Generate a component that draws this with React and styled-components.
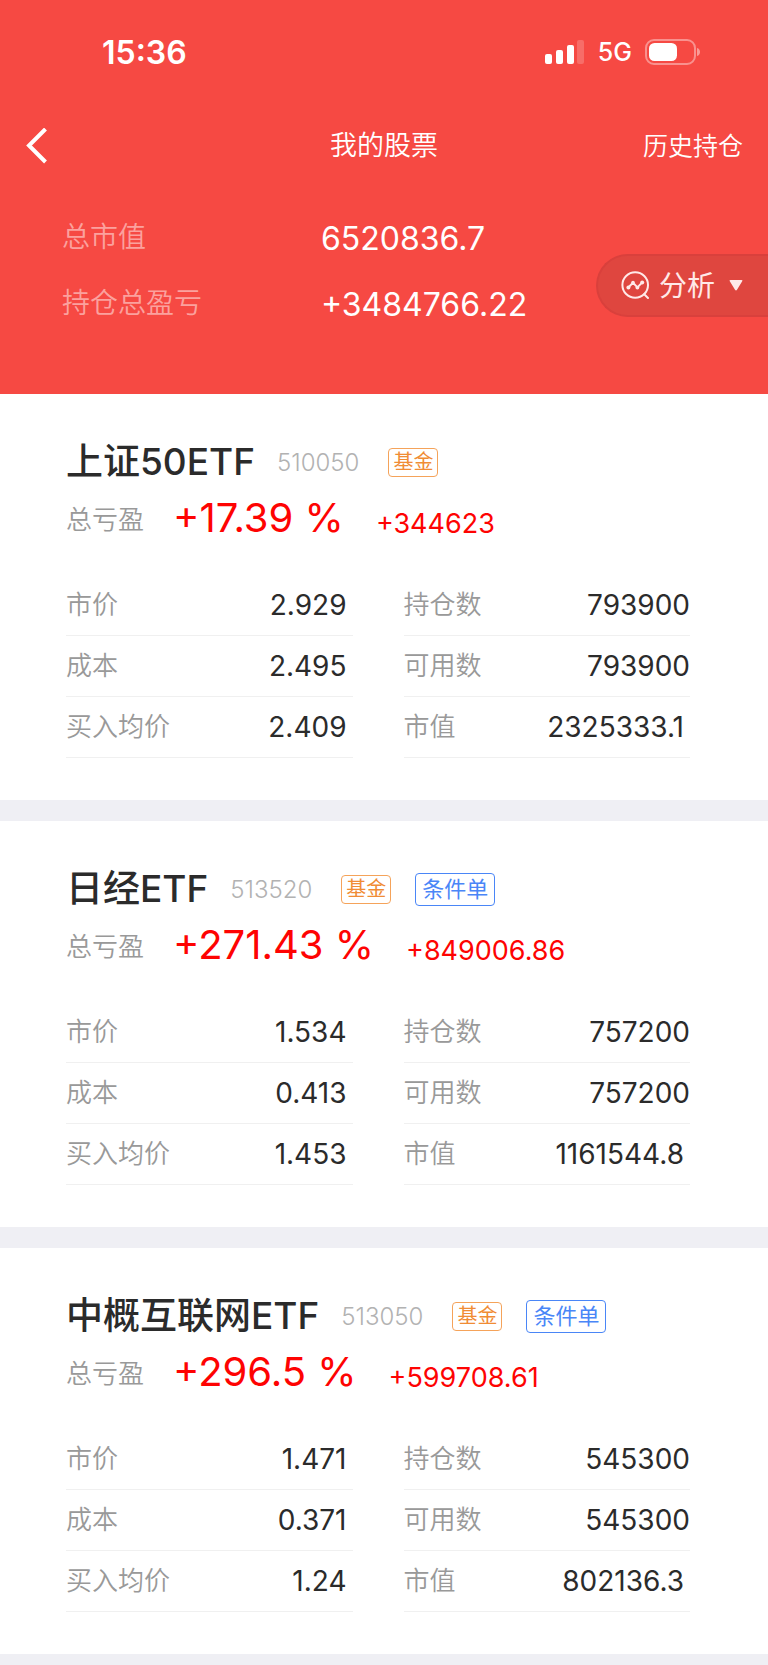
import React from "react";
import styled, { createGlobalStyle } from "styled-components";

const GlobalStyle = createGlobalStyle`
  * { box-sizing: border-box; }
  body {
    margin: 0;
    background: #efeff4;
    color: #2b2b2b;
    font-family: Inter, "Noto Sans CJK SC", sans-serif;
  }
  h1, h2, p, dl, dt, dd { margin: 0; font-weight: 400; }
  button { font: inherit; color: inherit; border: 0; background: none; padding: 0; cursor: pointer; }
  svg { display: block; }
`;

const Header = styled.header`
  background: #f64943;
  color: #fff;
`;

const StatusBar = styled.div`
  display: flex;
  align-items: center;
  justify-content: space-between;
  height: 104px;
  padding: 0 67px 0 102px;
`;

const Clock = styled.time`
  font-size: 32px;
  font-weight: 600;
`;

const StatusIcons = styled.div`
  display: flex;
  align-items: center;
  gap: 13px;
  font-size: 25px;
  font-weight: 500;
`;

const NavBar = styled.nav`
  display: grid;
  grid-template-columns: 1fr auto 1fr;
  align-items: center;
  height: 83px;
  padding: 0 25px;
`;

const BackButton = styled.button`
  justify-self: start;
`;

const Title = styled.h1`
  font-size: 27px;
  line-height: 40px;
  font-weight: 350;
`;

const HistoryLink = styled.a`
  justify-self: end;
  color: inherit;
  text-decoration: none;
  font-size: 25px;
  line-height: 40px;
  font-weight: 350;
`;

const Summary = styled.section`
  display: flex;
  align-items: flex-start;
  justify-content: space-between;
  padding: 18px 0 56px 62px;
`;

const Totals = styled.dl`
  display: grid;
  grid-template-columns: 259px auto;
  padding-top: 1px;
`;

const TotalLabel = styled.dt`
  font-size: 28px;
  line-height: 62px;
  font-weight: 350;
  color: #fba19e;
`;

const TotalValue = styled.dd`
  font-size: 32px;
  line-height: 66px;
`;

const AnalysisButton = styled.button`
  display: flex;
  align-items: center;
  height: 63px;
  margin-top: 49px;
  padding: 0 25px 0 23px;
  border: 2px solid #d9403c;
  border-right: 0;
  border-radius: 32px 0 0 32px;
  background: #df463f;
  color: #ffe9e8;
  font-size: 28px;
  line-height: 40px;

  span { margin: 0 14px 0 9px; }
`;

const Holdings = styled.main`
  display: grid;
  gap: 21px;
  padding-bottom: 11px;
`;

const Card = styled.article`
  background: #fff;
  padding: 44px 78px 42px 66px;
`;

const CardTitle = styled.header`
  display: flex;
  align-items: center;
  height: 48px;
`;

const FundName = styled.h2`
  font-size: 37px;
  line-height: 48px;
  font-weight: 500;
`;

const FundCode = styled.span`
  margin: 0 29px 0 22px;
  font-size: 24px;
  font-weight: 300;
  color: #b2b2b2;
`;

const FundTag = styled.span`
  padding: 0 4px;
  border: 1px solid #f5a35a;
  border-radius: 4px;
  color: #f08c35;
  font-size: 20px;
  line-height: 27px;
`;

const OrderTag = styled.a`
  margin-left: 24px;
  padding: 0 6px;
  border: 1px solid #4a86f7;
  border-radius: 4px;
  color: #4a86f7;
  font-size: 22px;
  line-height: 31px;
  text-decoration: none;
`;

const Profit = styled.p`
  display: flex;
  align-items: center;
  height: 64px;
  margin-bottom: 25px;
  line-height: 48px;
  color: #fe0302;
`;

const ProfitLabel = styled.span`
  margin-right: 29px;
  padding-top: 4px;
  font-size: 26px;
  font-weight: 350;
  color: #999;
`;

const ProfitRate = styled.strong`
  margin-right: 32px;
  font-size: 40px;
  font-weight: 400;
`;

const ProfitAmount = styled.span`
  padding-top: 12px;
  font-size: 27px;
`;

const Details = styled.div`
  display: grid;
  grid-template-columns: 1fr 1fr;
  gap: 51px;
`;

const DetailRow = styled.div`
  display: flex;
  align-items: center;
  justify-content: space-between;
  height: 61px;
  border-bottom: 1px solid #f0f0f0;
`;

const DetailLabel = styled.dt`
  font-size: 26px;
  line-height: 58px;
  font-weight: 350;
  color: #999;
`;

const DetailValue = styled.dd`
  padding-right: ${(p) => (p.$flush ? 0 : 6)}px;
  font-size: 28px;
  line-height: 60px;
`;

const holdings = [
  {
    name: "上证50ETF", code: "510050", conditional: false, rate: "+17.39 %", amount: "+344623",
    price: "2.929", cost: "2.495", average: "2.409", quantity: "793900", available: "793900", value: "2325333.1",
  },
  {
    name: "日经ETF", code: "513520", conditional: true, rate: "+271.43 %", amount: "+849006.86",
    price: "1.534", cost: "0.413", average: "1.453", quantity: "757200", available: "757200", value: "1161544.8",
  },
  {
    name: "中概互联网ETF", code: "513050", conditional: true, rate: "+296.5 %", amount: "+599708.61",
    price: "1.471", cost: "0.371", average: "1.24", quantity: "545300", available: "545300", value: "802136.3",
  },
];

const Signal = () => (
  <svg width="40" height="26" viewBox="0 0 40 26" fill="#fff" aria-hidden="true">
    <rect x="0" y="15" width="7" height="10" rx="2" />
    <rect x="11" y="11" width="7" height="14" rx="2" />
    <rect x="22" y="6" width="7" height="19" rx="2" />
    <rect x="32" y="1" width="7" height="24" rx="2" opacity="0.2" />
  </svg>
);

const Battery = () => (
  <svg width="56" height="26" viewBox="0 0 56 26" fill="none" aria-hidden="true">
    <rect x="1" y="1" width="49" height="24" rx="8" stroke="#fff" strokeOpacity="0.4" strokeWidth="2" />
    <rect x="4" y="4" width="28" height="18" rx="5.5" fill="#fff" />
    <path d="M52 9c4 1 4 7 0 8z" fill="#fff" fillOpacity="0.45" />
  </svg>
);

const BackIcon = () => (
  <svg width="22" height="36" viewBox="0 0 22 36" fill="none" stroke="#fff" strokeWidth="4" aria-hidden="true">
    <path d="M20.5 1 4 17.500 20.500 34" />
  </svg>
);

const AnalysisIcon = () => (
  <svg width="29" height="29" viewBox="0 0 29 29" fill="none" stroke="currentColor" strokeWidth="2" strokeLinecap="round" strokeLinejoin="round" aria-hidden="true">
    <circle cx="14.2" cy="14" r="12.8" />
    <path d="M23.2 23.2 27 27" />
    <path d="M7.6 16.2 12 11.6l4.4 4.8 4.6-4.8" />
    <g fill="currentColor" stroke="none">
      <circle cx="7.4" cy="16.4" r="2" />
      <circle cx="12" cy="11.6" r="1.8" />
      <circle cx="16.4" cy="16.6" r="1.9" />
      <circle cx="21.2" cy="11.6" r="2" />
    </g>
  </svg>
);

const Caret = () => (
  <svg width="14" height="11" viewBox="0 0 14 11" fill="currentColor" aria-hidden="true">
    <path d="M1.5 0h11q1.5 0 .7 1.3L8 9.8q-1 1.3-2 0L.8 1.3Q0 0 1.5 0z" />
  </svg>
);

function Detail({ label, value, flush }) {
  return (
    <DetailRow>
      <DetailLabel>{label}</DetailLabel>
      <DetailValue $flush={flush}>{value}</DetailValue>
    </DetailRow>
  );
}

function Holding({ item }) {
  return (
    <Card>
      <CardTitle>
        <FundName>{item.name}</FundName>
        <FundCode>{item.code}</FundCode>
        <FundTag>基金</FundTag>
        {item.conditional && <OrderTag href="#orders">条件单</OrderTag>}
      </CardTitle>
      <Profit>
        <ProfitLabel>总亏盈</ProfitLabel>
        <ProfitRate>{item.rate}</ProfitRate>
        <ProfitAmount>{item.amount}</ProfitAmount>
      </Profit>
      <Details>
        <dl>
          <Detail label="市价" value={item.price} />
          <Detail label="成本" value={item.cost} />
          <Detail label="买入均价" value={item.average} />
        </dl>
        <dl>
          <Detail label="持仓数" value={item.quantity} flush />
          <Detail label="可用数" value={item.available} flush />
          <Detail label="市值" value={item.value} />
        </dl>
      </Details>
    </Card>
  );
}

export default function App() {
  return (
    <>
      <GlobalStyle />
      <Header>
        <StatusBar>
          <Clock>15:36</Clock>
          <StatusIcons>
            <Signal />
            <span>5G</span>
            <Battery />
          </StatusIcons>
        </StatusBar>
        <NavBar>
          <BackButton type="button" aria-label="返回"><BackIcon /></BackButton>
          <Title>我的股票</Title>
          <HistoryLink href="#history">历史持仓</HistoryLink>
        </NavBar>
        <Summary>
          <Totals>
            <TotalLabel>总市值</TotalLabel>
            <TotalValue>6520836.7</TotalValue>
            <TotalLabel>持仓总盈亏</TotalLabel>
            <TotalValue>+3484766.22</TotalValue>
          </Totals>
          <AnalysisButton type="button">
            <AnalysisIcon />
            <span>分析</span>
            <Caret />
          </AnalysisButton>
        </Summary>
      </Header>
      <Holdings>
        {holdings.map((item) => <Holding key={item.code} item={item} />)}
      </Holdings>
    </>
  );
}
